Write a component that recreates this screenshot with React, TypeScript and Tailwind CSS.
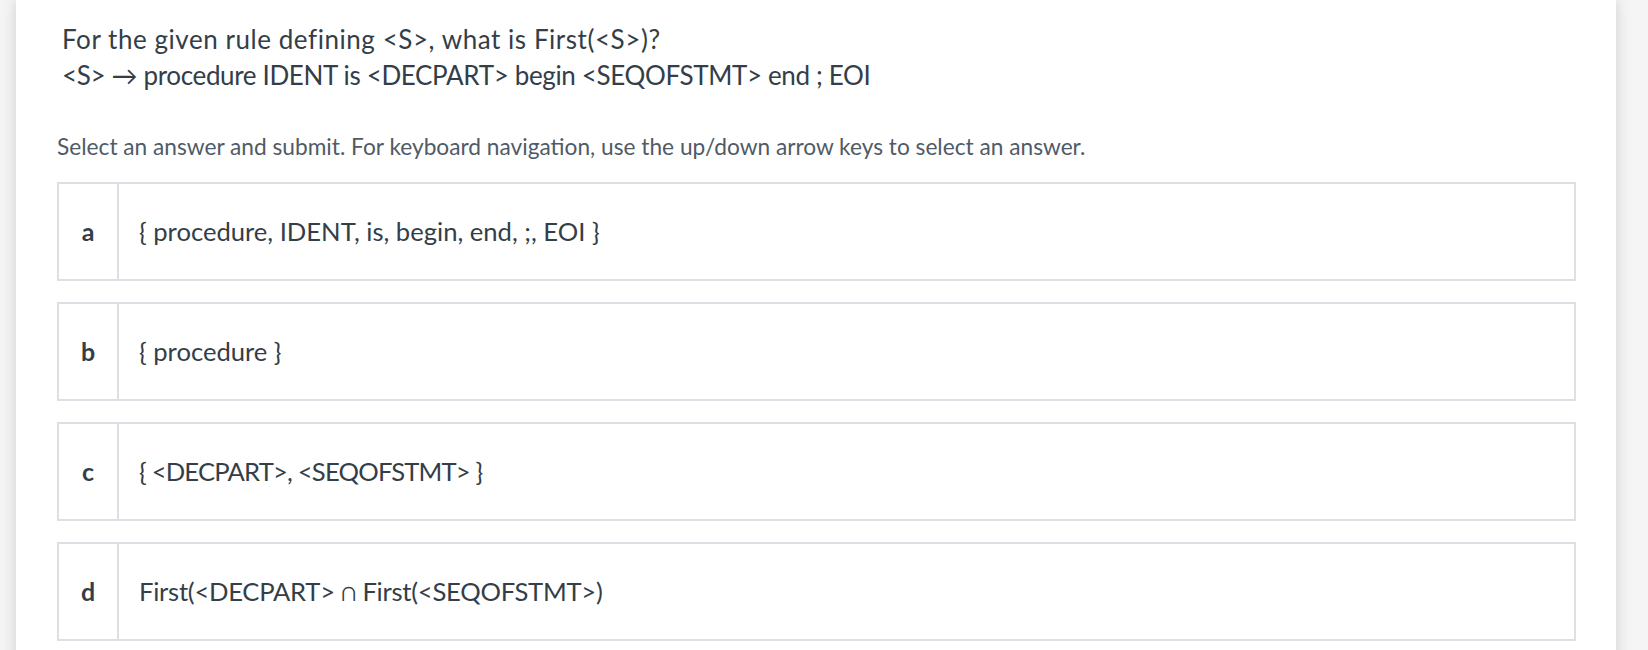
import React from "react";

const options = [
  { key: "a", text: "{ procedure, IDENT, is, begin, end, ;, EOI }", track: "tracking-[0px]" },
  { key: "b", text: "{ procedure }", track: "tracking-[0px]" },
  { key: "c", text: "{ <DECPART>, <SEQOFSTMT> }", track: "tracking-[-0.8px]" },
  { key: "d", text: "First(<DECPART> ∩ First(<SEQOFSTMT>)", track: "tracking-[-0.25px]" },
];

export default function App() {
  return (
    <div
      className="min-h-[650px] w-[1648px] bg-[#f5f5f5] pl-[16px] pr-[32px] overflow-hidden"
      style={{ fontFamily: "Lato, 'Noto Sans', sans-serif" }}
    >
      <div className="bg-white min-h-[700px] shadow-[0_0_14px_rgba(0,0,0,0.16)] pl-[41px] pr-[40px] pt-[21px]">
        <div className="pl-[5px] text-[26px] leading-[36px] text-[#333e48]">
          <div className="tracking-[0.55px]">For the given rule defining &lt;S&gt;, what is First(&lt;S&gt;)?</div>
          <div className="tracking-[-0.35px]">&lt;S&gt; → procedure IDENT is &lt;DECPART&gt; begin &lt;SEQOFSTMT&gt; end ; EOI</div>
        </div>
        <div className="mt-[40px] text-[22.7px] leading-[28px] text-[#4f5b66]">
          Select an answer and submit. For keyboard navigation, use the up/down arrow keys to select an answer.
        </div>
        <div className="mt-[21px] flex flex-col gap-[21px]">
          {options.map((o) => (
            <div
              key={o.key}
              className="flex h-[99px] border-2 border-[#dcdfe3] bg-white"
            >
              <div className="w-[60px] flex items-center justify-center border-r-2 border-[#dcdfe3] text-[25px] font-bold text-[#333e48]">
                {o.key}
              </div>
              <div className={`flex items-center pl-[20px] text-[25.6px] text-[#333e48] ${o.track}`}>
                {o.text}
              </div>
            </div>
          ))}
        </div>
      </div>
    </div>
  );
}
